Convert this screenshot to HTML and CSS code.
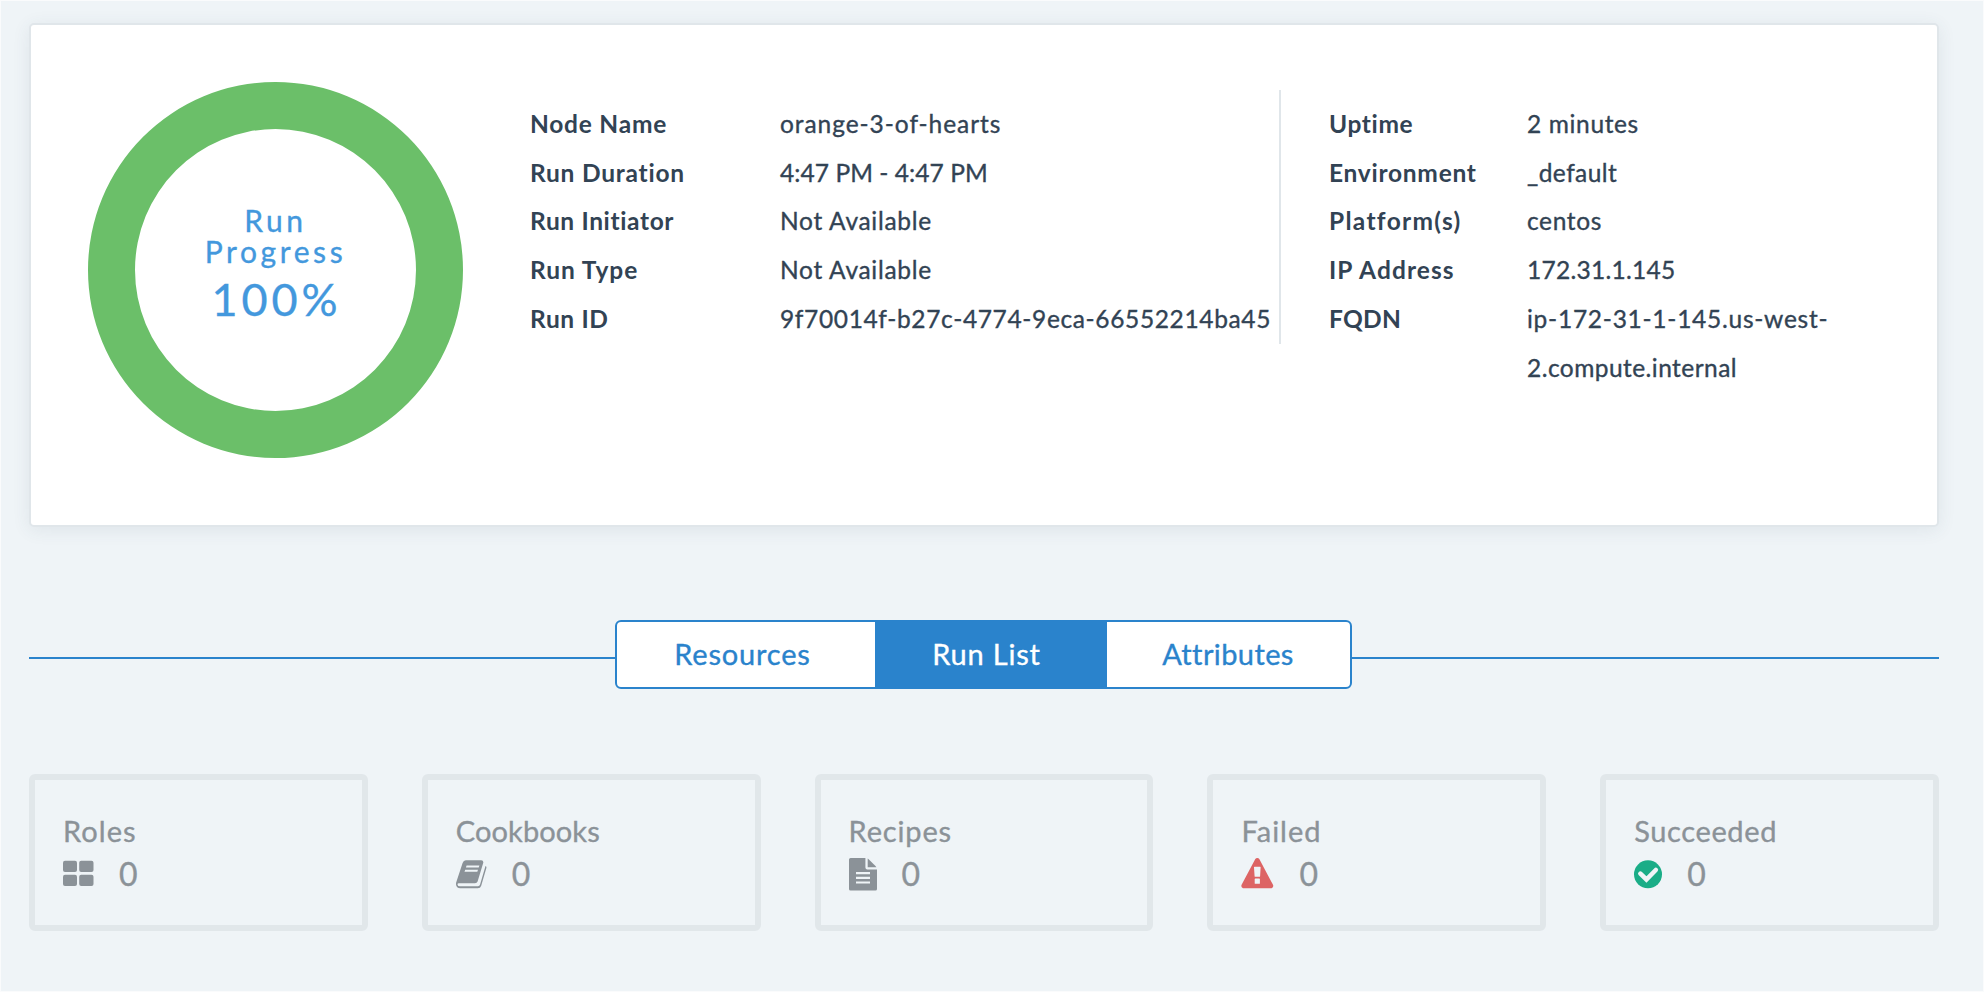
FILE: index.html
```html
<!DOCTYPE html>
<html lang="en">
<head>
<meta charset="utf-8">
<title>Run Details</title>
<link rel="stylesheet" href="styles.css">
</head>
<body>
<main class="page">
  <section class="summary">
    <div class="progress">
      <div class="progress-title">Run<br>Progress</div>
      <div class="progress-value">100%</div>
    </div>
    <dl class="details details-run">
      <dt class="ls-107">Node Name</dt><dd class="ls-119">orange-3-of-hearts</dd>
      <dt class="ls-107">Run Duration</dt><dd class="ls-32">4:47 PM - 4:47 PM</dd>
      <dt class="ls-90">Run Initiator</dt><dd class="ls-95">Not Available</dd>
      <dt class="ls-119">Run Type</dt><dd class="ls-95">Not Available</dd>
      <dt class="ls-90">Run ID</dt><dd class="ls-90">9f70014f-b27c-4774-9eca-66552214ba45</dd>
    </dl>
    <dl class="details details-node">
      <dt class="ls-90">Uptime</dt><dd class="ls-90">2 minutes</dd>
      <dt class="ls-100">Environment</dt><dd class="ls-67">_default</dd>
      <dt class="ls-159">Platform(s)</dt><dd class="ls-90">centos</dd>
      <dt class="ls-132">IP Address</dt><dd class="ls-51">172.31.1.145</dd>
      <dt class="ls-51">FQDN</dt><dd><span class="ls-100">ip-172-31-1-145.us-west-</span><br><span class="ls-67">2.compute.internal</span></dd>
    </dl>
  </section>

  <nav class="tabs">
    <div class="tab-group">
      <a class="tab tab-resources">Resources</a>
      <a class="tab tab-runlist active">Run List</a>
      <a class="tab tab-attributes">Attributes</a>
    </div>
  </nav>

  <section class="stats">
    <div class="stat">
      <div class="stat-name ls-107">Roles</div>
      <div class="stat-row">
        <svg class="icon" width="31" height="34" viewBox="0 0 31 34"><rect x="0" y="3.7" width="14" height="11.3" rx="2"/><rect x="16.2" y="3.7" width="14.3" height="11.3" rx="2"/><rect x="0" y="17.7" width="14" height="11.3" rx="2"/><rect x="16.2" y="17.7" width="14.3" height="11.3" rx="2"/></svg>
        <span>0</span>
      </div>
    </div>
    <div class="stat">
      <div class="stat-name ls-10">Cookbooks</div>
      <div class="stat-row">
        <svg class="icon" width="31" height="34" viewBox="0 0 31 34"><path fill-rule="evenodd" d="M9.8 3.3H25.2Q27.8 3.5 27.2 6L21.6 24.4Q20.9 26.2 19 26.2H2.8Q1.5 26.3 1.5 27.4Q1.8 29.3 4 29.3H22Q23.5 29.2 24 27.8L29.5 9Q30.8 9.7 30.3 11.3L25.2 28.7Q24.4 31.3 21.8 31.3H4.2Q.4 31 0 27.4Q-.1 26 .5 24.4L6.6 6Q7.5 3.4 9.8 3.3ZM10.6 8.4L9.9 10.4H22.7L23.4 8.4ZM9.2 12.8L8.5 14.8H21.3L22 12.8Z"/></svg>
        <span>0</span>
      </div>
    </div>
    <div class="stat">
      <div class="stat-name ls-90">Recipes</div>
      <div class="stat-row">
        <svg class="icon" width="28" height="34" viewBox="0 0 28 34"><path fill-rule="evenodd" d="M1.6 1H16.4V10.6Q16.5 12.5 18.3 12.5H28V32Q28 33.6 26.4 33.6H1.6Q0 33.6 0 32V2.6Q0 1 1.6 1ZM7 15V17.2H21V15ZM7 19.7V21.9H21V19.7ZM7 24.4V26.6H21V24.4Z"/><path d="M18.7 1.6Q19.4 2 19.9 2.4L26.5 8.9Q27.1 9.6 27.4 10.3H18.7Z"/></svg>
        <span>0</span>
      </div>
    </div>
    <div class="stat">
      <div class="stat-name ls-100">Failed</div>
      <div class="stat-row">
        <svg class="icon icon-failed" width="33" height="34" viewBox="0 0 33 34"><path fill-rule="evenodd" d="M14.3 2.1Q15 .9 16.3 .9Q17.6 .9 18.3 2.1L32 27.8Q33 30.1 30.6 31.3H2Q-.4 30.1 .6 27.8ZM13 10.4Q12.9 9.7 13.6 9.7H19.1Q19.7 9.7 19.6 10.4L19.1 19.3Q19 19.8 18.5 19.8H14.2Q13.7 19.8 13.6 19.3ZM13.7 22Q13.7 21.6 14.2 21.6H18.4Q18.9 21.6 18.9 22V26.3Q18.9 26.8 18.4 26.8H14.2Q13.7 26.8 13.7 26.3Z"/></svg>
        <span>0</span>
      </div>
    </div>
    <div class="stat">
      <div class="stat-name ls-67">Succeeded</div>
      <div class="stat-row">
        <svg class="icon icon-ok" width="28" height="34" viewBox="0 0 28 34"><circle cx="14" cy="17.3" r="14"/><path class="check" d="M6.4 16.7L12.4 22.5L21.8 13"/></svg>
        <span>0</span>
      </div>
    </div>
  </section>
</main>
</body>
</html>
```
FILE: styles.css
```css
* { box-sizing: border-box; }

body {
  margin: 0;
  background: #eff4f7;
  color: #324354;
  font-family: Lato, "Open Sans", sans-serif;
  -webkit-text-stroke: 0.35px currentColor;
}

.page {
  height: 992px;
  padding: 22px 44px 0 28px;
  border: 1px solid #fafbfc;
}

.summary {
  display: flex;
  align-items: flex-start;
  height: 504px;
  padding: 57px 0 0 57px;
  background: #fff;
  border: 2px solid #e0e6ea;
  border-radius: 5px;
  box-shadow: 0 3px 18px rgba(50, 80, 100, 0.09);
}

.progress {
  width: 375px;
  height: 376px;
  padding-top: 76px;
  border: 47px solid #6bbf69;
  border-radius: 50%;
  color: #4398dd;
  text-align: center;
}

.progress-title {
  font-size: 30px;
  line-height: 31px;
  letter-spacing: 3.6px;
}

.progress-value {
  margin-top: 5px;
  font-size: 45px;
  line-height: 54px;
  letter-spacing: 3.9px;
  text-indent: 2px;
}

.details {
  display: grid;
  align-content: start;
  margin: 8px 0 0;
  padding-top: 10px;
  font-size: 24.5px;
  line-height: 48.7px;
}

.details dt { font-weight: 700; -webkit-text-stroke-width: 0; }
.details dd { margin: 0; white-space: nowrap; }

.details-run {
  grid-template-columns: 250px 1fr;
  width: 818px;
  height: 254px;
  padding-left: 67px;
  border-right: 2px solid #e0e6ea;
}

.details-node {
  grid-template-columns: 198px 1fr;
  padding-left: 48px;
}

.tabs {
  display: flex;
  align-items: flex-start;
  justify-content: center;
  height: 70px;
  margin-top: 93px;
  color: #2a83cc;
}

.tabs::before,
.tabs::after {
  content: "";
  height: 2px;
  margin-top: 37px;
  background: #2a83cc;
}

.tabs::before { width: 586px; }
.tabs::after { flex: 1; }

.tab-group {
  display: flex;
  width: 737px;
  height: 69px;
  overflow: hidden;
  background: #fff;
  border: 2px solid #2a83cc;
  border-radius: 6px;
}

.tab {
  font-size: 29px;
  line-height: 63px;
  text-align: center;
  letter-spacing: 0.8px;
}

.tab-resources { width: 258px; padding-right: 7px; }
.tab-runlist { width: 232px; padding-right: 9px; }
.tab-attributes { flex: 1; padding-right: 1px; letter-spacing: 0.4px; }
.tab.active { background: #2a83cc; color: #fff; }

.stats {
  display: grid;
  grid-template-columns: repeat(5, 1fr);
  gap: 54px;
  margin-top: 84px;
  color: #8b9298;
}

.stat {
  height: 157px;
  padding: 33px 28px 0;
  border: 6px solid #e1e7ea;
  border-radius: 6px;
}

.stat-name {
  font-size: 29px;
  line-height: 36px;
}

.stat-row {
  display: flex;
  align-items: center;
  gap: 25px;
  height: 50px;
  font-size: 32px;
  line-height: 48px;
}

.icon { display: block; fill: #8b9298; }
.icon-failed { fill: #dd6464; }
.icon-ok { fill: #1aad87; }

.check {
  fill: none;
  stroke: #eff4f7;
  stroke-width: 4.6;
  stroke-linecap: round;
}

/* Tracking steps */
.ls-10 { letter-spacing: 0.1px; }
.ls-32 { letter-spacing: 0.07px; }
.ls-51 { letter-spacing: 0.27px; }
.ls-67 { letter-spacing: 0.45px; }
.ls-90 { letter-spacing: 0.64px; }
.ls-95 { letter-spacing: 0.71px; }
.ls-100 { letter-spacing: 0.74px; }
.ls-107 { letter-spacing: 0.77px; }
.ls-119 { letter-spacing: 0.94px; }
.ls-132 { letter-spacing: 1.08px; }
.ls-159 { letter-spacing: 1.32px; }

.stat-name.ls-67 { letter-spacing: 0.63px; }
.stat-name.ls-90 { letter-spacing: 0.85px; }
.stat-name.ls-100 { letter-spacing: 1px; }
.stat-name.ls-107 { letter-spacing: 1.07px; }
```
